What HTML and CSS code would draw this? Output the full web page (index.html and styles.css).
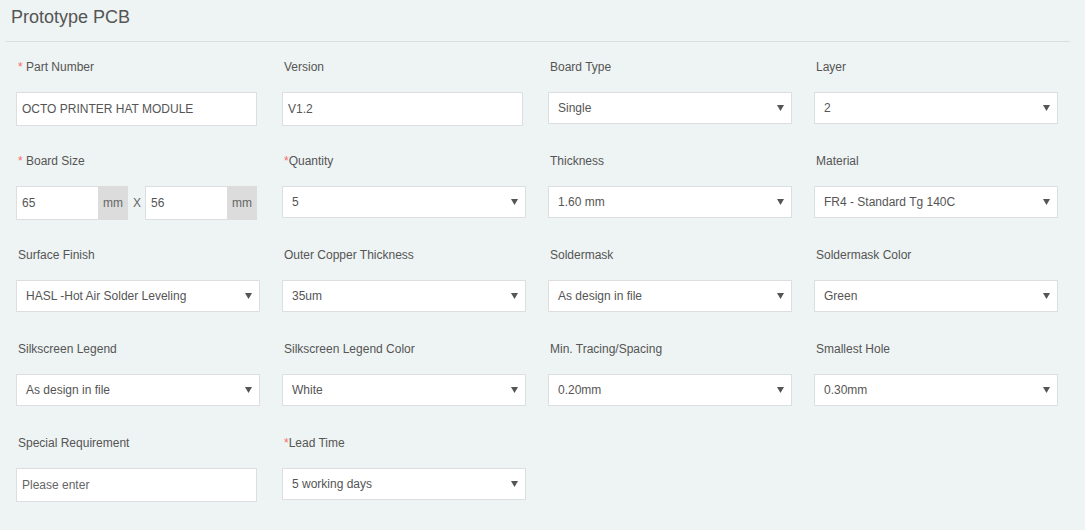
FILE: index.html
```html
<!DOCTYPE html>
<html>
<head>
<meta charset="utf-8">
<link rel="stylesheet" href="styles.css">
</head>
<body>
<div class="page">
  <div class="header"><h1 class="title">Prototype PCB</h1></div>
  <div class="form">
    <div class="field">
      <div class="label"><span class="req">*</span> Part Number</div>
      <input class="input w241" value="OCTO PRINTER HAT MODULE">
    </div>
    <div class="field">
      <div class="label">Version</div>
      <input class="input w241" value="V1.2">
    </div>
    <div class="field">
      <div class="label">Board Type</div>
      <div class="select"><span>Single</span><svg class="arrow" width="7" height="6" viewBox="0 0 7 6"><path d="M0 0H7L3.5 6Z"/></svg></div>
    </div>
    <div class="field">
      <div class="label">Layer</div>
      <div class="select"><span>2</span><svg class="arrow" width="7" height="6" viewBox="0 0 7 6"><path d="M0 0H7L3.5 6Z"/></svg></div>
    </div>

    <div class="field">
      <div class="label"><span class="req">*</span> Board Size</div>
      <div class="size">
        <div class="group"><input class="input gin" value="65"><span class="addon">mm</span></div>
        <span class="x">X</span>
        <div class="group"><input class="input gin" value="56"><span class="addon">mm</span></div>
      </div>
    </div>
    <div class="field">
      <div class="label"><span class="req">*</span>Quantity</div>
      <div class="select"><span>5</span><svg class="arrow" width="7" height="6" viewBox="0 0 7 6"><path d="M0 0H7L3.5 6Z"/></svg></div>
    </div>
    <div class="field">
      <div class="label">Thickness</div>
      <div class="select"><span>1.60 mm</span><svg class="arrow" width="7" height="6" viewBox="0 0 7 6"><path d="M0 0H7L3.5 6Z"/></svg></div>
    </div>
    <div class="field">
      <div class="label">Material</div>
      <div class="select"><span>FR4 - Standard Tg 140C</span><svg class="arrow" width="7" height="6" viewBox="0 0 7 6"><path d="M0 0H7L3.5 6Z"/></svg></div>
    </div>

    <div class="field">
      <div class="label">Surface Finish</div>
      <div class="select"><span>HASL -Hot Air Solder Leveling</span><svg class="arrow" width="7" height="6" viewBox="0 0 7 6"><path d="M0 0H7L3.5 6Z"/></svg></div>
    </div>
    <div class="field">
      <div class="label">Outer Copper Thickness</div>
      <div class="select"><span>35um</span><svg class="arrow" width="7" height="6" viewBox="0 0 7 6"><path d="M0 0H7L3.5 6Z"/></svg></div>
    </div>
    <div class="field">
      <div class="label">Soldermask</div>
      <div class="select"><span>As design in file</span><svg class="arrow" width="7" height="6" viewBox="0 0 7 6"><path d="M0 0H7L3.5 6Z"/></svg></div>
    </div>
    <div class="field">
      <div class="label">Soldermask Color</div>
      <div class="select"><span>Green</span><svg class="arrow" width="7" height="6" viewBox="0 0 7 6"><path d="M0 0H7L3.5 6Z"/></svg></div>
    </div>

    <div class="field">
      <div class="label">Silkscreen Legend</div>
      <div class="select"><span>As design in file</span><svg class="arrow" width="7" height="6" viewBox="0 0 7 6"><path d="M0 0H7L3.5 6Z"/></svg></div>
    </div>
    <div class="field">
      <div class="label">Silkscreen Legend Color</div>
      <div class="select"><span>White</span><svg class="arrow" width="7" height="6" viewBox="0 0 7 6"><path d="M0 0H7L3.5 6Z"/></svg></div>
    </div>
    <div class="field">
      <div class="label">Min. Tracing/Spacing</div>
      <div class="select"><span>0.20mm</span><svg class="arrow" width="7" height="6" viewBox="0 0 7 6"><path d="M0 0H7L3.5 6Z"/></svg></div>
    </div>
    <div class="field">
      <div class="label">Smallest Hole</div>
      <div class="select"><span>0.30mm</span><svg class="arrow" width="7" height="6" viewBox="0 0 7 6"><path d="M0 0H7L3.5 6Z"/></svg></div>
    </div>

    <div class="field">
      <div class="label">Special Requirement</div>
      <input class="input w241" placeholder="Please enter">
    </div>
    <div class="field">
      <div class="label"><span class="req">*</span>Lead Time</div>
      <div class="select"><span>5 working days</span><svg class="arrow" width="7" height="6" viewBox="0 0 7 6"><path d="M0 0H7L3.5 6Z"/></svg></div>
    </div>
  </div>
</div>
</body>
</html>
```
FILE: styles.css
```css
* { box-sizing: border-box; }
html, body { margin: 0; padding: 0; }
body {
  background: #eef3f3;
  font-family: "Liberation Sans", Arial, sans-serif;
  color: #555;
  font-size: 12px;
}
.page { width: 1085px; height: 530px; overflow: hidden; }
.header {
  margin-left: 6px;
  width: 1064px;
  height: 42px;
  border-bottom: 1px solid #d9dede;
  padding: 6px 0 0 5px;
}
.title {
  margin: 0;
  font-size: 18px;
  font-weight: normal;
  color: #555;
  line-height: 22px;
}
.form {
  display: grid;
  grid-template-columns: repeat(4, 266px);
  grid-auto-rows: 69px;
  row-gap: 25px;
  padding: 15px 0 0 16px;
  align-items: start;
}
.field { display: flex; flex-direction: column; }
.label {
  height: 20px;
  line-height: 20px;
  padding-left: 2px;
  margin-bottom: 15px;
  color: #555;
  font-size: 12px;
}
.req { color: #f56c6c; }
.input {
  height: 34px;
  border: 1px solid #dcdfe0;
  background: #fff;
  font-family: "Liberation Sans", Arial, sans-serif;
  font-size: 12px;
  color: #555;
  padding: 0 5px;
  outline: none;
  margin: 0;
}
.input::placeholder { color: #666; }
.w241 { width: 241px; }
.select {
  width: 244px;
  height: 32px;
  border: 1px solid #dcdfe0;
  background: #fff;
  display: flex;
  align-items: center;
  justify-content: space-between;
  padding: 0 7px 0 9px;
  color: #555;
  font-size: 12px;
}
.arrow { fill: #555; }
.size { display: flex; align-items: center; width: 241px; }
.group { display: flex; height: 34px; }
.gin { width: 82px; border-right: none; }
.addon {
  width: 30px;
  background: #dcdcdc;
  display: flex;
  align-items: center;
  justify-content: center;
  color: #666;
  font-size: 12px;
}
.x { width: 17px; text-align: center; color: #666; padding-left: 1px; }
```
